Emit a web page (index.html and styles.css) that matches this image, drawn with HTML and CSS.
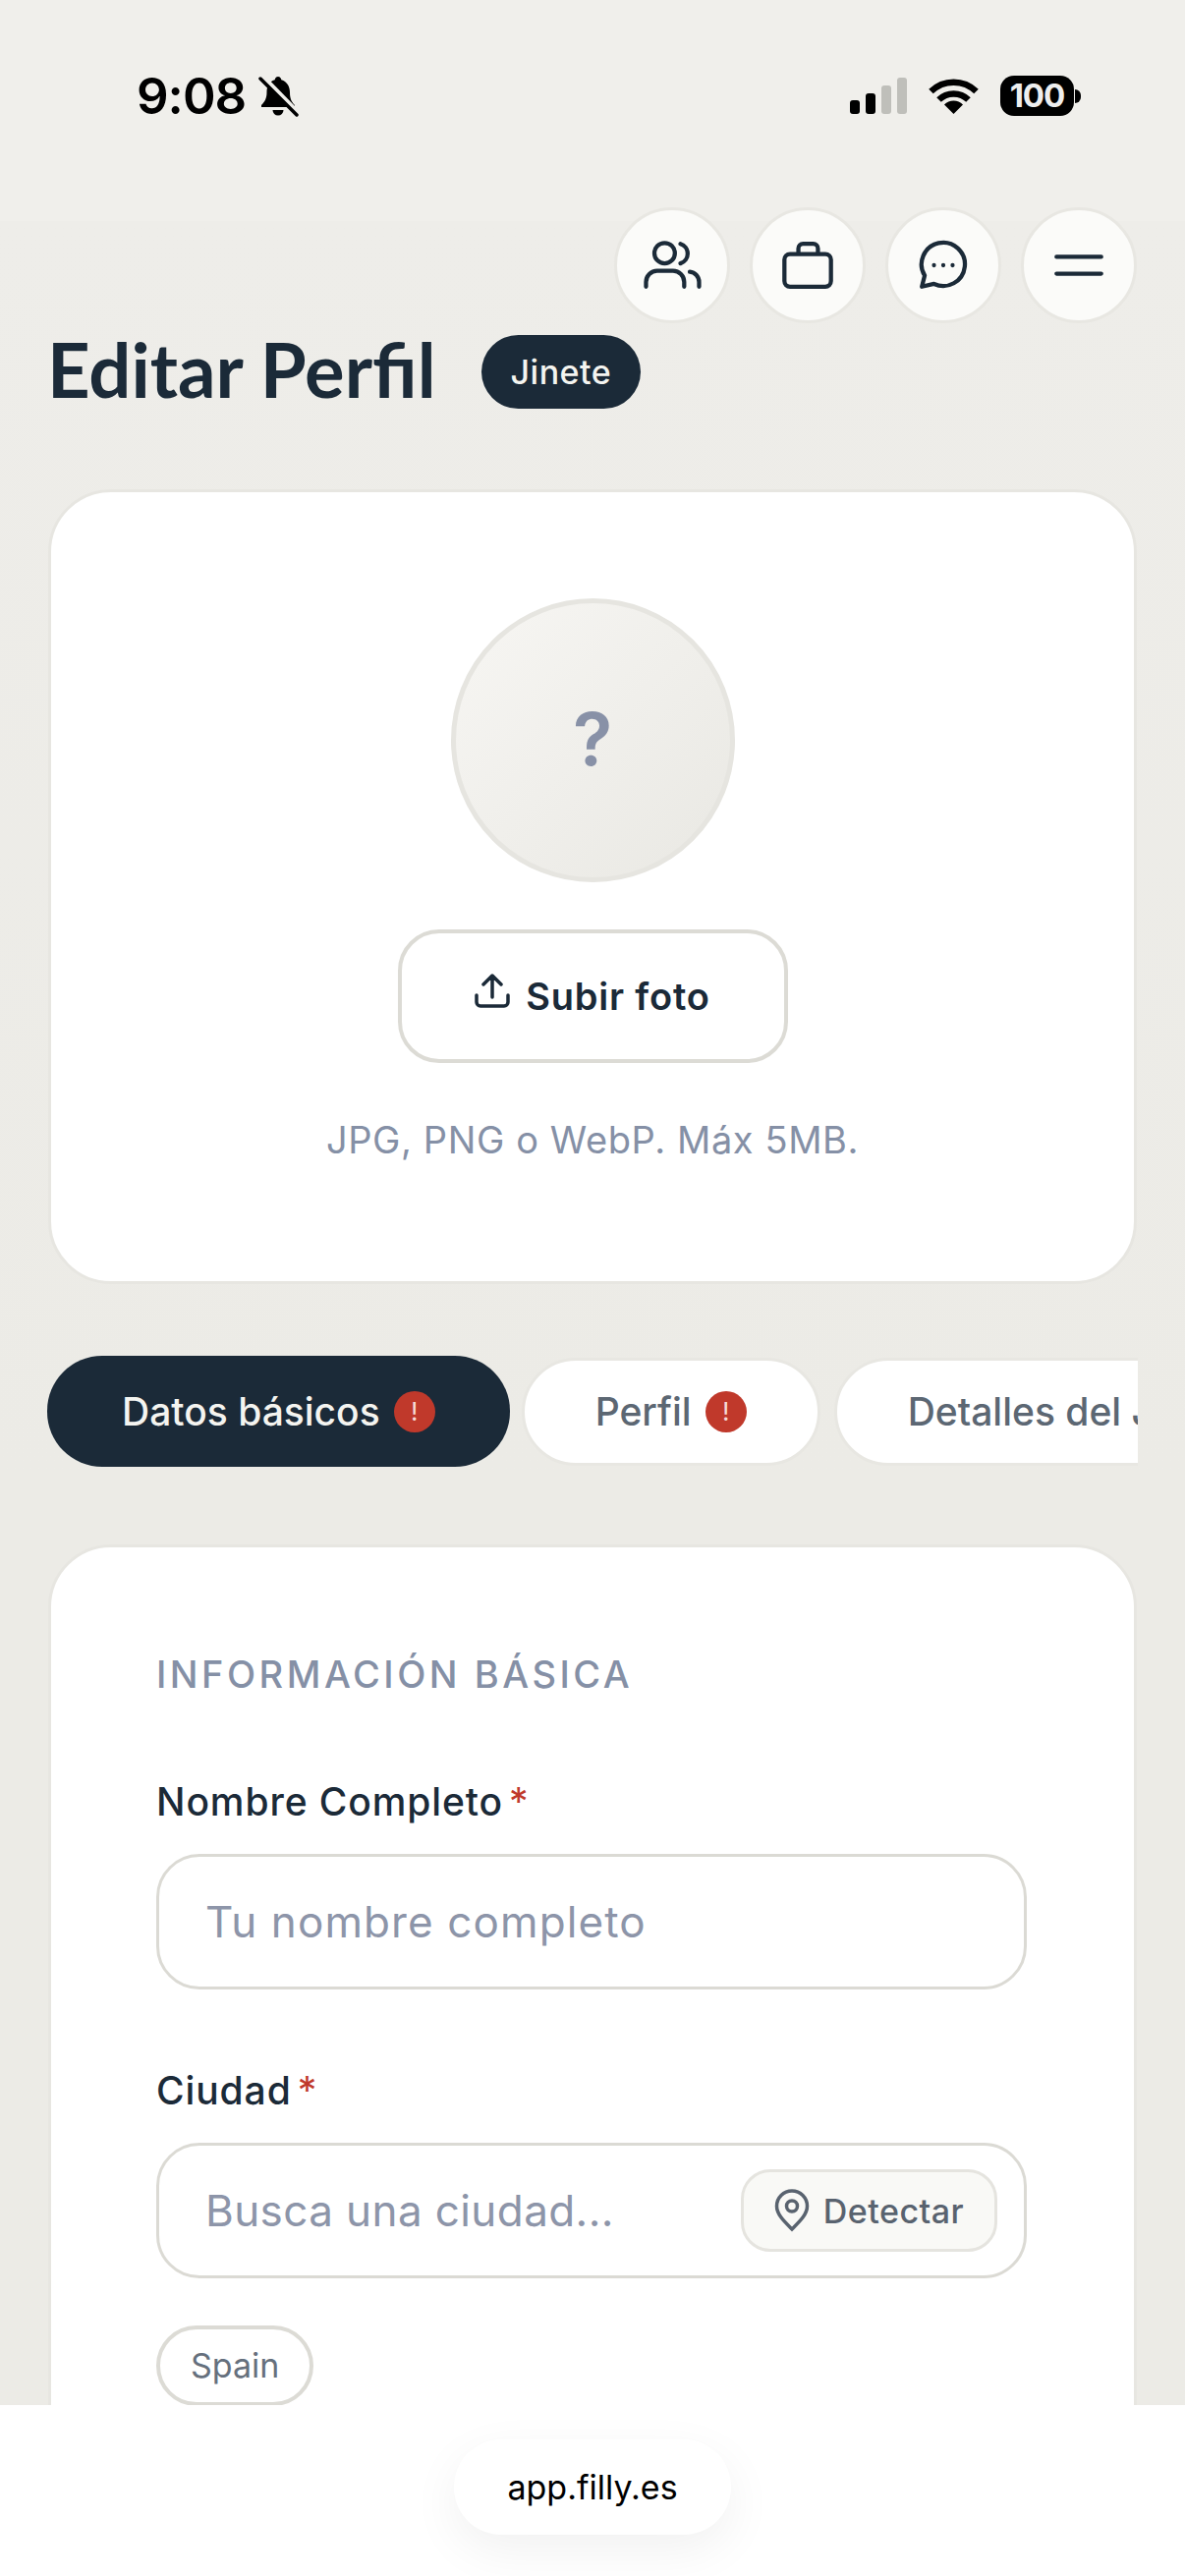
FILE: index.html
```html
<!doctype html>
<html lang="es">
  <head>
    <title>Editar Perfil</title>
    <meta name="viewport" content="width=device-width, initial-scale=1.0" />
    <link rel="stylesheet" href="styles.css">
  </head>
  <body>
    <div class="status-bar">
      <div class="status-left">
        <span class="clock">9:08</span>
        <svg class="bell" viewBox="0 0 42 42">
          <path d="M21 1c-2 0-3 1.500-3.300 3.200C11.500 6 9.500 11.500 9.500 17c0 6-2 9.500-5.500 13v2h34v-2c-3.500-3.500-5-7-5-13 0-5.500-2.500-11-8.700-12.800C24 2.500 23 1 21 1z"/>
          <path d="M15.500 35h11a5.500 5.500 0 0 1-11 0z"/>
          <path class="bell-gap" d="M6 1l37 38"/>
          <path class="bell-slash" d="M3 3l37 37"/>
        </svg>
      </div>
      <div class="status-right">
        <svg class="signal" viewBox="0 0 58 37">
          <rect x="0" y="23" width="10" height="14" rx="3"/>
          <rect x="16" y="16" width="10" height="21" rx="3"/>
          <rect class="signal-off" x="32" y="8" width="10" height="29" rx="3"/>
          <rect class="signal-off" x="48" y="0" width="10" height="37" rx="3"/>
        </svg>
        <svg class="wifi" viewBox="0 0 51 37">
          <path class="wifi-arc" d="M2.500 14a33 33 0 0 1 46 0"/>
          <path class="wifi-arc" d="M10.500 22.500a21.500 21.500 0 0 1 30 0"/>
          <path d="M25.500 37l-9.500-9.500a13.500 13.500 0 0 1 19 0z"/>
        </svg>
        <div class="battery">
          <span class="battery-level">100</span>
          <span class="battery-nub"></span>
        </div>
      </div>
    </div>

    <nav class="top-nav">
      <button class="nav-btn">
        <svg viewBox="0 0 114 114">
          <circle cx="49" cy="44" r="11"/>
          <path d="M29 80v-5a12 12 0 0 1 12-12h17a12 12 0 0 1 12 12v5"/>
          <path d="M66 34a11 11 0 0 1 0 21"/>
          <path d="M76 64a11 11 0 0 1 10 11v5"/>
        </svg>
      </button>
      <button class="nav-btn">
        <svg viewBox="0 0 114 114">
          <rect x="32" y="45" width="50" height="35" rx="6"/>
          <path d="M47 44v-5a5 5 0 0 1 5-5h11a5 5 0 0 1 5 5v5"/>
        </svg>
      </button>
      <button class="nav-btn">
        <svg viewBox="0 0 114 114">
          <path d="M34 80l3-12a23.300 23.300 0 1 1 10 9z"/>
          <circle class="dot" cx="47" cy="57" r="1.500"/>
          <circle class="dot" cx="57" cy="57" r="1.500"/>
          <circle class="dot" cx="67" cy="57" r="1.500"/>
        </svg>
      </button>
      <button class="nav-btn">
        <svg viewBox="0 0 114 114">
          <path d="M33 48h48M33 66h48"/>
        </svg>
      </button>
    </nav>

    <header class="page-title">
      <h1>Editar Perfil</h1>
      <span class="role-badge">Jinete</span>
    </header>

    <section class="card photo-card">
      <div class="avatar">?</div>
      <button class="upload-btn">
        <svg viewBox="0 0 36 36">
          <path d="M18 24V3M9 11l9-9 9 9M2 22v7a4 4 0 0 0 4 4h24a4 4 0 0 0 4-4v-7"/>
        </svg>
        Subir foto
      </button>
      <p class="hint">JPG, PNG o WebP. Máx 5MB.</p>
    </section>

    <div class="tabs">
      <button class="tab active">Datos básicos <span class="alert">!</span></button>
      <button class="tab">Perfil <span class="alert">!</span></button>
      <button class="tab">Detalles del Jinete</button>
    </div>

    <section class="card form-card">
      <h2>INFORMACIÓN BÁSICA</h2>
      <label class="field-label" for="nombre">Nombre Completo<span class="required">*</span></label>
      <input class="field-input" id="nombre" type="text" placeholder="Tu nombre completo" />
      <label class="field-label city-label" for="ciudad">Ciudad<span class="required">*</span></label>
      <div class="city-box">
        <input class="city-input" id="ciudad" type="text" placeholder="Busca una ciudad..." />
        <button class="detect-btn">
          <svg viewBox="0 0 36 44">
            <path d="M18 41C10 33 2.500 26 2.500 17.500a15.500 15.500 0 0 1 31 0C33.500 26 26 33 18 41z"/>
            <circle cx="18" cy="17.500" r="5.500"/>
          </svg>
          Detectar
        </button>
      </div>
      <span class="country-chip">Spain</span>
    </section>

    <div class="address-bar">
      <div class="url-pill">app.filly.es</div>
    </div>
  </body>
</html>
```

FILE: styles.css
```css
html,
body {
  margin: 0;
  height: 2622px;
  overflow: hidden;
}
body {
  font-family: Inter, "Noto Sans", sans-serif;
  color: #1b2a38;
  background: linear-gradient(#f0efeb 0, #f0efeb 225px, #eeede9 225px, #ecebe6 1500px);
}
button {
  font-family: inherit;
  cursor: pointer;
}

/* status bar */
.status-bar {
  height: 211px;
  box-sizing: border-box;
  padding: 77px 106px 0 139px;
  display: flex;
  justify-content: space-between;
  align-items: flex-start;
  color: #000;
}
.status-left {
  display: flex;
  align-items: center;
  gap: 12px;
  height: 42px;
}
.clock {
  font-size: 51px;
  font-weight: 600;
  letter-spacing: -1px;
  line-height: 42px;
}
.bell {
  width: 42px;
  height: 42px;
}
.bell-gap {
  fill: none;
  stroke: #f0efeb;
  stroke-width: 4;
}
.bell-slash {
  fill: none;
  stroke: #000;
  stroke-width: 3.500;
  stroke-linecap: round;
}
.status-right {
  display: flex;
  align-items: center;
  gap: 22px;
  height: 41px;
}
.signal {
  width: 58px;
  height: 37px;
}
.signal-off {
  fill: #bfbfba;
}
.wifi {
  width: 51px;
  height: 37px;
}
.wifi-arc {
  fill: none;
  stroke: #000;
  stroke-width: 6.500;
}
.battery {
  display: flex;
  align-items: center;
  gap: 1px;
}
.battery-level {
  width: 75px;
  height: 41px;
  background: #000;
  color: #eee;
  border-radius: 14px;
  font-size: 33px;
  font-weight: 700;
  letter-spacing: -1px;
  line-height: 41px;
  text-align: center;
}
.battery-nub {
  width: 6px;
  height: 14px;
  background: #000;
  border-radius: 0 7px 7px 0;
}

/* round nav buttons */
.top-nav {
  display: flex;
  justify-content: flex-end;
  gap: 20px;
  padding-right: 49px;
}
.nav-btn {
  box-sizing: border-box;
  width: 118px;
  height: 118px;
  padding: 0 2px;
  border: 3px solid #e8e7e2;
  border-radius: 50%;
  background: #fbfbf9;
}
.nav-btn svg {
  display: block;
  width: 108px;
  height: 112px;
  fill: none;
  stroke: #1b2a38;
  stroke-width: 4.500;
  stroke-linecap: round;
  stroke-linejoin: round;
}
.nav-btn .dot {
  fill: #1b2a38;
  stroke-width: 1.500;
}

/* title */
.page-title {
  display: flex;
  align-items: center;
  gap: 46px;
  margin: 12px 51px 82px 48px;
  height: 75px;
}
h1 {
  margin: -6px 0 0;
  font-family: Lato, sans-serif;
  font-size: 76px;
  font-weight: 700;
  line-height: 75px;
  color: #1b2a38;
}
.role-badge {
  background: #1b2a38;
  color: #f4f4f0;
  border-radius: 38px;
  padding: 0 30px;
  font-size: 34px;
  font-weight: 500;
  letter-spacing: 0.5px;
  line-height: 75px;
}

/* cards */
.card {
  box-sizing: border-box;
  width: 1108px;
  margin-left: 49px;
  background: #fff;
  border: 3px solid #e7e6e1;
  border-radius: 64px;
}
.photo-card {
  height: 809px;
  padding-top: 108px;
  display: flex;
  flex-direction: column;
  align-items: center;
}
.avatar {
  box-sizing: border-box;
  width: 289px;
  height: 289px;
  padding-bottom: 4px;
  border: 5px solid #e6e5e0;
  border-radius: 50%;
  background: linear-gradient(135deg, #f7f6f3, #e9e8e3);
  color: #8891a7;
  font-size: 74px;
  font-weight: 600;
  display: flex;
  align-items: center;
  justify-content: center;
}
.upload-btn {
  box-sizing: border-box;
  width: 397px;
  height: 136px;
  margin-top: 48px;
  background: #fff;
  border: 4px solid #dcdbd5;
  border-radius: 42px;
  color: #1b2a38;
  font-size: 38px;
  font-weight: 600;
  letter-spacing: 0.8px;
  display: flex;
  align-items: center;
  justify-content: center;
  gap: 16px;
}
.upload-btn svg {
  width: 36px;
  height: 36px;
  margin-top: -10px;
  fill: none;
  stroke: #1b2a38;
  stroke-width: 3.500;
  stroke-linecap: round;
  stroke-linejoin: round;
}
.hint {
  margin: 52px 0 0;
  color: #8590a6;
  font-size: 38px;
  letter-spacing: 0.6px;
  line-height: 52px;
}

/* tabs row, third tab runs off the edge */
.tabs {
  display: flex;
  align-items: center;
  gap: 14px;
  width: 1110px;
  margin: 73px 0 0 48px;
  overflow: hidden;
}
.tab {
  flex-shrink: 0;
  height: 110px;
  padding: 0 72px;
  border: 3px solid #e8e7e2;
  border-radius: 55px;
  background: #fff;
  color: #5c6773;
  font-size: 39px;
  font-weight: 500;
  display: flex;
  align-items: center;
  gap: 14px;
  white-space: nowrap;
}
.tab.active {
  height: 113px;
  margin-right: -2px;
  padding: 0 76px;
  border: none;
  border-radius: 56px;
  background: #1b2a38;
  color: #f4f4f0;
}
.alert {
  width: 42px;
  height: 42px;
  border-radius: 50%;
  background: #c0392b;
  color: #f6dcd8;
  font-size: 26px;
  font-weight: 400;
  line-height: 42px;
  text-align: center;
}

/* form */
.form-card {
  height: 1200px;
  margin-top: 79px;
  padding: 105px 107px 0;
}
h2 {
  margin: 0;
  font-size: 38px;
  font-weight: 500;
  letter-spacing: 3.500px;
  line-height: 48px;
  color: #8590a6;
}
.field-label {
  display: block;
  margin-top: 81px;
  font-size: 39px;
  font-weight: 500;
  letter-spacing: 0.9px;
  line-height: 50px;
}
.city-label {
  margin-top: 78px;
}
.required {
  margin-left: 6px;
  color: #c0392b;
  font-weight: 400;
}
.field-input {
  display: block;
  box-sizing: border-box;
  width: 886px;
  height: 138px;
  margin-top: 28px;
  padding: 0 47px;
  background: #fff;
  border: 3px solid #dbdad4;
  border-radius: 44px;
  font-family: inherit;
  font-size: 44px;
  letter-spacing: 1.100px;
  color: #1b2a38;
}
input::placeholder {
  color: #8d95a9;
  opacity: 1;
}
.city-box {
  box-sizing: border-box;
  width: 886px;
  height: 138px;
  margin-top: 28px;
  padding: 0 27px 0 47px;
  background: #fff;
  border: 3px solid #dbdad4;
  border-radius: 44px;
  display: flex;
  align-items: center;
}
.city-input {
  flex: 1;
  min-width: 0;
  border: none;
  outline: none;
  padding: 0;
  font-family: inherit;
  font-size: 44px;
  letter-spacing: 0.4px;
  color: #1b2a38;
}
.detect-btn {
  box-sizing: border-box;
  width: 261px;
  height: 84px;
  background: #f9f9f6;
  border: 3px solid #e5e4df;
  border-radius: 30px;
  color: #59636f;
  font-size: 34px;
  font-weight: 500;
  letter-spacing: 0.5px;
  display: flex;
  align-items: center;
  justify-content: center;
  gap: 14px;
  padding: 0;
}
.detect-btn svg {
  width: 36px;
  height: 44px;
  fill: none;
  stroke: #59636f;
  stroke-width: 3.500;
}
.country-chip {
  display: inline-block;
  box-sizing: border-box;
  height: 82px;
  margin-top: 48px;
  padding: 0 31px;
  border: 4px solid #dcdbd5;
  border-radius: 41px;
  color: #66707d;
  font-size: 34px;
  line-height: 74px;
}

/* browser chrome at the bottom */
.address-bar {
  position: fixed;
  left: 0;
  right: 0;
  bottom: 0;
  height: 174px;
  background: #fff;
  display: flex;
  justify-content: center;
  padding-top: 35px;
  box-sizing: border-box;
}
.url-pill {
  width: 282px;
  height: 97px;
  border-radius: 48px;
  background: #fff;
  box-shadow: 0 16px 50px rgba(0, 0, 0, 0.06);
  color: #000;
  font-size: 34px;
  line-height: 97px;
  text-align: center;
}
```
